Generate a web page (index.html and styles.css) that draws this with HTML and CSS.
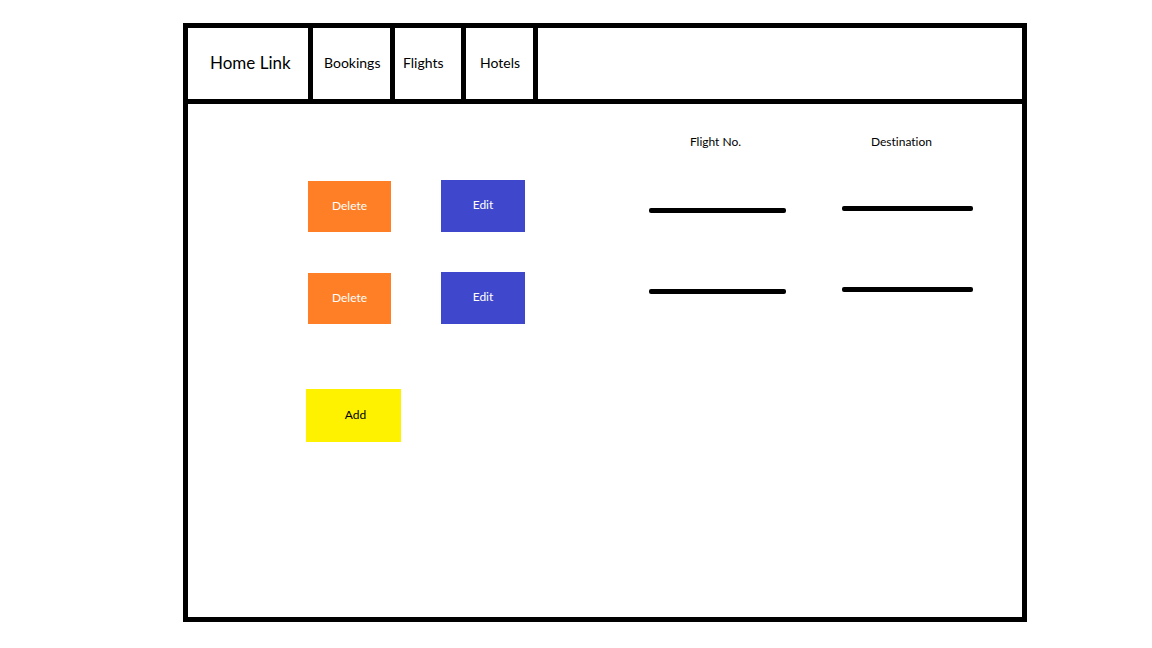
FILE: index.html
```html
<!DOCTYPE html>
<html lang="en">
<head>
<meta charset="utf-8">
<meta name="viewport" content="width=device-width, initial-scale=1">
<title>Flights</title>
<link rel="stylesheet" href="styles.css">
</head>
<body>
<div class="frame">
  <nav class="nav">
    <a class="nav-link nav-home" href="#">Home Link</a>
    <a class="nav-link nav-bookings" href="#">Bookings</a>
    <a class="nav-link nav-flights" href="#">Flights</a>
    <a class="nav-link nav-hotels" href="#">Hotels</a>
  </nav>
  <main class="content">
    <section class="actions">
      <div class="action-row">
        <button class="button delete" type="button">Delete</button>
        <button class="button edit" type="button">Edit</button>
      </div>
      <div class="action-row">
        <button class="button delete" type="button">Delete</button>
        <button class="button edit" type="button">Edit</button>
      </div>
      <button class="button add" type="button">Add</button>
    </section>
    <table class="flights">
      <thead>
        <tr><th class="number">Flight No.</th><th class="destination">Destination</th></tr>
      </thead>
      <tbody>
        <tr><td class="number"><div class="line"></div></td><td class="destination"><div class="line"></div></td></tr>
        <tr><td class="number"><div class="line"></div></td><td class="destination"><div class="line"></div></td></tr>
      </tbody>
    </table>
  </main>
</div>
</body>
</html>
```
FILE: styles.css
```css
* {
  box-sizing: border-box;
}

body {
  margin: 0;
  min-height: 100vh;
  padding: 23px 125px 26px 183px;
  display: flex;
  background: #fff;
  color: #000;
  font-family: Lato, "Open Sans", sans-serif;
  font-size: 12px;
  font-variant-ligatures: none;
  line-height: 16px;
}

.frame {
  flex: 1;
  display: flex;
  flex-direction: column;
  border: 5px solid #000;
}

.nav {
  display: flex;
  border-bottom: 5px solid #000;
}

.nav-link {
  padding: 25px 8px 26px 11px;
  border-right: 5px solid #000;
  color: inherit;
  font-size: 14px;
  line-height: 20px;
  text-decoration: none;
  white-space: nowrap;
}

.nav-home {
  width: 125px;
  padding-left: 22px;
  font-size: 17px;
}

.nav-bookings {
  width: 82px;
}

.nav-flights {
  width: 71px;
  padding-left: 8px;
}

.nav-hotels {
  width: 72px;
  padding-left: 14px;
}

.content {
  flex: 1;
  display: flex;
  justify-content: space-between;
  align-items: flex-start;
  padding: 30px 49px 30px 118px;
}

.actions {
  display: flex;
  flex-direction: column;
  gap: 40px;
  padding-top: 46px;
}

.action-row {
  display: flex;
  align-items: flex-end;
  gap: 50px;
  padding-left: 2px;
}

.button {
  border: 0;
  padding: 0 0 2px;
  font: inherit;
  font-variant-ligatures: none;
  color: #fff;
  cursor: pointer;
}

.delete {
  width: 83px;
  height: 51px;
  background: #ff7f27;
}

.edit {
  width: 84px;
  height: 52px;
  background: #3f48cc;
}

.add {
  width: 95px;
  height: 53px;
  margin-top: 25px;
  padding-left: 4px;
  background: #fff200;
  color: #000;
}

.flights {
  border-collapse: collapse;
}

.flights th {
  padding: 0;
  font-weight: 400;
}

.flights td {
  height: 81px;
  padding: 0;
  vertical-align: bottom;
}

.flights .number {
  width: 165px;
  padding-right: 28px;
}

.flights .destination {
  width: 159px;
  padding-left: 28px;
}

.flights th.number {
  padding-right: 32px;
}

.flights th.destination {
  padding-right: 12px;
}

.flights td.destination {
  padding-bottom: 2px;
}

.flights tbody tr:first-child td {
  height: 63px;
}

.line {
  height: 5px;
  border-radius: 2px;
  background: #000;
}
```
